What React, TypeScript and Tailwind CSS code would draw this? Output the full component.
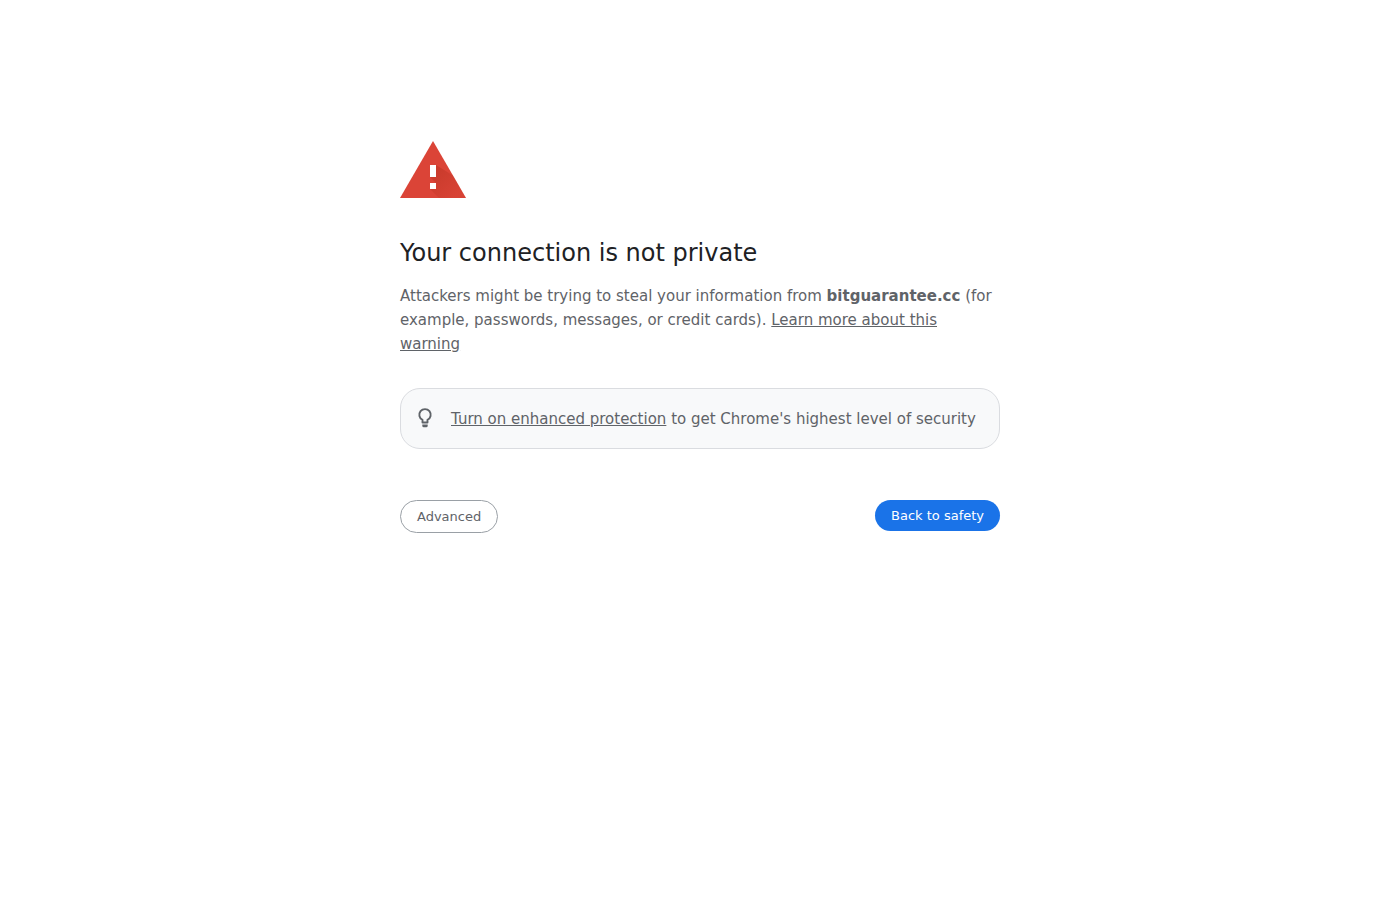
interface ActionButtonProps {
  label: string;
  primary?: boolean;
}

function WarningIcon() {
  return (
    <svg className="h-[57px] w-[66px]" viewBox="0 0 66 57" aria-hidden="true">
      <defs>
        <linearGradient id="iconShade" gradientUnits="userSpaceOnUse" x1="33" y1="34" x2="54" y2="55">
          <stop offset="0" stopColor="#b93221" stopOpacity="0.5" />
          <stop offset="1" stopColor="#b93221" stopOpacity="0.1" />
        </linearGradient>
      </defs>
      <path d="M33 0 66 57H0Z" fill="#db4437" />
      {/* Long shadow cast by the exclamation mark */}
      <path d="M36 24 53 34.500 66 57H39L30 48H36V42L30 36H36Z" fill="url(#iconShade)" />
      <path d="M30 24h6v12h-6zM30 42h6v6h-6z" fill="#fff" />
    </svg>
  );
}

function BulbIcon() {
  return (
    <svg className="h-6 w-6 shrink-0" viewBox="0 0 24 24" fill="none" aria-hidden="true">
      <path
        d="M9.500 16.500V13.900A5.700 5.700 0 1 1 14.500 13.900V16.500Z"
        stroke="#5f6368"
        strokeWidth="1.900"
        strokeLinejoin="round"
      />
      <path d="M9.300 18.500h5.400v1.200a1.500 1.500 0 0 1-1.500 1.500h-2.400a1.500 1.500 0 0 1-1.500-1.500z" fill="#5f6368" />
    </svg>
  );
}

function ActionButton({ label, primary = false }: ActionButtonProps) {
  return (
    <button
      type="button"
      className={`cursor-pointer rounded-full px-4 py-2 text-[13px] leading-[15px] ${
        primary ? 'bg-[#1a73e8] text-white' : 'border border-[#9aa0a6] bg-white text-[#5f6368]'
      }`}
    >
      {label}
    </button>
  );
}

export default function App() {
  return (
    <div className="min-h-screen bg-white font-['DejaVu_Sans',sans-serif] text-[15px] leading-6 text-[#5f6368]">
      <main className="mx-auto w-full max-w-[600px] pt-[141px]">
        <WarningIcon />

        <h1 className="mt-10 text-2xl leading-[30px] text-[#202124]">Your connection is not private</h1>

        <p className="mt-4">
          Attackers might be trying to steal your information from <strong>bitguarantee.cc</strong> (for example,
          passwords, messages, or credit cards).{' '}
          <a href="#learn-more" className="underline">
            Learn more about this warning
          </a>
        </p>

        {/* Enhanced protection promo */}
        <div className="mt-8 flex items-start gap-3.5 rounded-[20px] border border-[#dadce0] bg-[#f8f9fa] px-3 pt-[17px] pb-4">
          <BulbIcon />
          <p className="leading-[26px]">
            <a href="#enhanced-protection" className="underline">
              Turn on enhanced protection
            </a>{' '}
            to get Chrome's highest level of security
          </p>
        </div>

        <div className="mt-[51px] flex items-start justify-between">
          <ActionButton label="Advanced" />
          <ActionButton label="Back to safety" primary />
        </div>
      </main>
    </div>
  );
}
